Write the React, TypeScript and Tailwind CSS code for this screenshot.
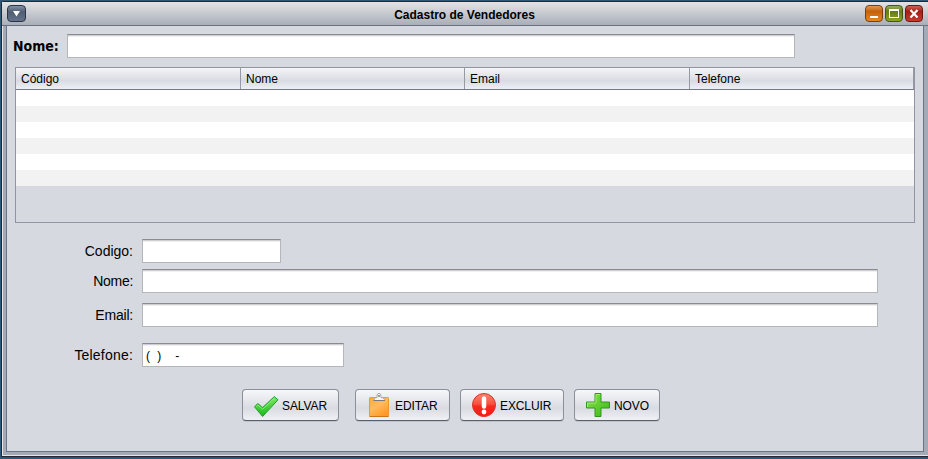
import React from "react";

const fieldClass =
  "h-[24px] border border-[#b5b6ba] border-t-[#898b90] bg-white shadow-[inset_0_1px_0_#cfcfd1,inset_0_2px_0_#f0f0f0]";

function Field({ label, width, gap, tracking, value }: { label: string; width: string; gap: string; tracking: string; value?: React.ReactNode }) {
  return (
    <div className={`flex ${gap}`}>
      <label className={`mr-[9px] w-[126px] text-right text-[14px] leading-[25px] ${tracking}`}>{label}</label>
      <div className={`${fieldClass} ${width} whitespace-pre pl-[3px] text-[12px] leading-[25px]`}>{value}</div>
    </div>
  );
}

function ActionButton({ label, width, children }: { label: string; width: string; children: React.ReactNode }) {
  return (
    <button
      className={`flex h-[32px] ${width} items-center rounded-[4px] border border-[#8b8f99] border-b-[#5b5f68] bg-linear-to-b from-[#f7f8fa] via-[#d9dbe2] via-60% to-[#eff1f6] pl-[10px] text-[12px] shadow-[0_1px_0_#bfc3cc]`}
    >
      <span className="mr-[4px] flex h-[26px] w-[25px] shrink-0 items-center justify-center">{children}</span>
      <span className="pt-[2px] tracking-[-0.1px]">{label}</span>
    </button>
  );
}

function CheckIcon() {
  return (
    <svg width="26" height="26" viewBox="0 0 26 26" className="shrink-0">
      <defs>
        <linearGradient id="check" x1="0" y1="0" x2="0" y2="1">
          <stop offset="0" stopColor="#7fe866" />
          <stop offset="1" stopColor="#16ba1a" />
        </linearGradient>
      </defs>
      <path d="M1.5 14.8 4.8 11.6 9.6 15.6 21.3 4.6 25 7.8 9.6 24.5Z" fill="url(#check)" stroke="#239b2b" strokeLinejoin="round" />
      <path d="M3.2 14.8 4.9 13.1 9.7 17.1 21.4 6.1" fill="none" stroke="#a0f383" strokeWidth=".8" />
    </svg>
  );
}

function ClipboardIcon() {
  return (
    <svg width="26" height="26" viewBox="0 0 26 26" className="shrink-0">
      <defs>
        <linearGradient id="board" x1="0" y1="0" x2=".6" y2="1">
          <stop offset="0" stopColor="#ffa93a" />
          <stop offset=".5" stopColor="#ffbb5a" />
          <stop offset="1" stopColor="#ff9a28" />
        </linearGradient>
      </defs>
      <rect x="3.5" y="5.5" width="19" height="19" rx=".7" fill="url(#board)" stroke="#f3972b" />
      <path d="M3.5 24.5h19" stroke="#c9771f" />
      <path d="M8 8.5c0-2 1-3 3-3V4Q11 1.3 13 1.3T15 4v1.5c2 0 3.5 1 3.5 3Z" fill="#f4f5f5" stroke="#a0a4a8" strokeWidth=".9" />
      <circle cx="13" cy="4" r="1.1" fill="#858a90" />
      <path d="M7.5 8.5h11.5" stroke="#777a7d" />
    </svg>
  );
}

function AlertIcon() {
  return (
    <svg width="26" height="26" viewBox="0 0 26 26" className="shrink-0">
      <defs>
        <linearGradient id="alert" x1="0" y1="0" x2="0" y2="1">
          <stop offset="0" stopColor="#f98770" />
          <stop offset=".45" stopColor="#f9513f" />
          <stop offset=".55" stopColor="#f52b20" />
          <stop offset="1" stopColor="#ff1714" />
        </linearGradient>
      </defs>
      <circle cx="13" cy="13" r="11.5" fill="url(#alert)" stroke="#d93429" />
      <path d="M13 6.5v8" stroke="white" strokeWidth="4.5" strokeLinecap="round" />
      <circle cx="13" cy="20" r="2.4" fill="white" />
    </svg>
  );
}

function PlusIcon() {
  return (
    <svg width="26" height="26" viewBox="0 0 26 26" className="shrink-0">
      <defs>
        <linearGradient id="plus" x1="0" y1="0" x2="1" y2="1">
          <stop offset="0" stopColor="#8de44b" />
          <stop offset="1" stopColor="#39b617" />
        </linearGradient>
      </defs>
      <path d="M10 1.5h6V10h8.5v6H16v8.5h-6V16H1.5v-6H10Z" fill="url(#plus)" stroke="#309620" />
      <path d="M11 10.5v-8h4M2.5 15v-4H11" fill="none" stroke="#aef27a" strokeWidth=".8" />
    </svg>
  );
}

function TitleBar() {
  const control = "flex h-[17px] w-[18px] items-center justify-center rounded-[4px] border";
  return (
    <header className="flex h-[24px] shrink-0 justify-between border-b border-[#6b7080] bg-linear-to-b from-[#e3e4e6] to-[#a9aeb8] pt-[3px] pr-[5px] pl-[5px]">
      <div className="flex w-[60px]">
        <div className="flex h-[17px] w-[19px] items-center justify-center rounded-[4px] border border-[#2b3444] bg-linear-to-b from-[#8490a2] via-[#505d73] via-40% to-[#66748b]">
          <svg width="9" height="7" viewBox="0 0 9 7"><path d="M1 1h7L4.5 6.5Z" fill="white" /></svg>
        </div>
      </div>
      <h1 className="-ml-[1px] text-[12px] leading-[20px] font-bold">Cadastro de Vendedores</h1>
      <div className="flex w-[60px] justify-end gap-[2px]">
        <div className={`${control} border-[#803c0d] bg-linear-to-b from-[#df9951] via-[#c56208] via-35% to-[#e58722]`}>
          <svg width="16" height="15" viewBox="0 0 16 15"><path d="M4 10h8v2H4z" fill="white" /></svg>
        </div>
        <div className={`${control} border-[#465618] bg-linear-to-b from-[#9aad59] via-[#657d0b] via-35% to-[#8da329]`}>
          <svg width="16" height="15" viewBox="0 0 16 15"><path d="M3 3h10v9H3zM4 5v6h8V5z" fill="white" fillRule="evenodd" /></svg>
        </div>
        <div className={`${control} border-[#681712] bg-linear-to-b from-[#cb6358] via-[#a41c14] via-35% to-[#c63a2d]`}>
          <svg width="16" height="15" viewBox="0 0 16 15"><path d="m4.5 4 7 7.5m0-7.5-7 7.5" stroke="white" strokeWidth="2.2" /></svg>
        </div>
      </div>
    </header>
  );
}

function SellerTable() {
  return (
    <div className="mx-[8px] mt-[9px] h-[156px] w-[900px] border border-[#9295a1]">
      <div className="grid h-[22px] grid-cols-[225px_224px_225px_224px] border-b border-[#747883] bg-linear-to-b from-[#f4f5f7] via-[#d9dbe2] via-60% to-[#edf0f5] text-[12px] leading-[22px]">
        {["Código", "Nome", "Email", "Telefone"].map((name) => (
          <div key={name} className="h-[21px] border-r border-[#969aa3] pl-[5px]">{name}</div>
        ))}
      </div>
      {[0, 1, 2, 3, 4, 5].map((row) => (
        <div key={row} className="h-[16px] odd:bg-[#f2f2f2] even:bg-white" />
      ))}
    </div>
  );
}

export default function App() {
  return (
    <div className="h-[459px] w-[928px] overflow-hidden bg-[#2e5875] pt-px pl-px font-['Liberation_Sans',Arial,sans-serif] text-black">
      <div className="flex h-[456px] w-[927px] flex-col rounded-tl-[3px] border border-r-0 border-[#25292f] bg-[#a5abb6] shadow-[inset_1px_-1px_0_#e5e6e8]">
        <TitleBar />
        <main className="ml-[4px] flex h-[426px] w-[918px] flex-col border border-t-0 border-[#6b7485] bg-[#d6d9e0]">
          <div className="mt-[8px] flex pl-[6px]">
            <label className="w-[54px] font-['DejaVu_Sans_Condensed','DejaVu_Sans',sans-serif] text-[14px] leading-[24px] font-bold">Nome:</label>
            <div className={`${fieldClass} w-[728px]`} />
          </div>
          <SellerTable />
          <form className="mt-[16px]">
            <Field label="Codigo:" width="w-[139px]" gap="" tracking="tracking-[0px]" />
            <Field label="Nome:" width="w-[736px]" gap="mt-[5px]" tracking="tracking-[-0.3px]" />
            <Field label="Email:" width="w-[736px]" gap="mt-[9px]" tracking="tracking-[-0.2px]" />
            <Field
              label="Telefone:"
              width="w-[202px]"
              gap="mt-[15px]"
              tracking="tracking-[0.2px]"
              value={<><span className="tracking-[2px]">( )</span><span className="ml-[12px]">-</span></>}
            />
          </form>
          <div className="mt-[21px] flex pl-[235px]">
            <ActionButton label="SALVAR" width="mr-[16px] w-[97px]"><CheckIcon /></ActionButton>
            <ActionButton label="EDITAR" width="mr-[10px] w-[95px]"><ClipboardIcon /></ActionButton>
            <ActionButton label="EXCLUIR" width="mr-[10px] w-[104px]"><AlertIcon /></ActionButton>
            <ActionButton label="NOVO" width="w-[86px]"><PlusIcon /></ActionButton>
          </div>
        </main>
      </div>
    </div>
  );
}
